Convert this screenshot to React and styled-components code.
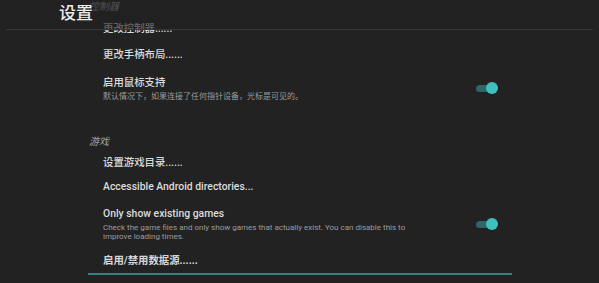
import styled, { createGlobalStyle } from 'styled-components';

const GlobalStyle = createGlobalStyle`
    html, body {
        margin: 0;
        padding: 0;
        background: #222222;
        overflow: hidden;
    }
    body {
        font-family: Roboto, "Noto Sans CJK SC", sans-serif;
        -webkit-font-smoothing: antialiased;
    }
`;

const sections = [
    {
        title: '控制器',
        items: [
            { title: '更改控制器......', height: 26 },
            { title: '更改手柄布局......', height: 26 },
            {
                title: '启用鼠标支持',
                summary: '默认情况下，如果连接了任何指针设备，光标是可见的。',
                toggle: true,
                height: 40,
            },
        ],
    },
    {
        title: '游戏',
        items: [
            { title: '设置游戏目录......', height: 24 },
            { title: 'Accessible Android directories...', height: 24 },
            {
                title: 'Only show existing games',
                summary: 'Check the game files and only show games that actually exist. You can disable this to improve loading times.',
                toggle: true,
                height: 50,
            },
            { title: '启用/禁用数据源......', height: 24, focused: true },
            { title: 'Rescan games...', height: 26 },
        ],
    },
];

function Switch() {
    return (
        <SwitchBox>
            <Track />
            <Thumb />
        </SwitchBox>
    );
}

function App() {
    return (
        <Screen>
            <GlobalStyle />
            <Header>
                <h1>设置</h1>
            </Header>

            <List>
                {sections.map((section) => (
                    <Section key={section.title}>
                        <Category>{section.title}</Category>
                        {section.items.map((item) => (
                            <div key={item.title}>
                                <Row $height={item.height}>
                                    <RowText>
                                        <RowTitle $strong={item.focused}>{item.title}</RowTitle>
                                        {item.summary && <Summary>{item.summary}</Summary>}
                                    </RowText>
                                    {item.toggle && <Switch />}
                                </Row>
                                {item.focused && <FocusLine />}
                            </div>
                        ))}
                    </Section>
                ))}
            </List>
        </Screen>
    );
}

export default App;

const Screen = styled.div`
    position: relative;
    width: 599px;
    height: 283px;
    overflow: hidden;
    background: #222222;
`;

// the toolbar floats over the scrolled list
const Header = styled.div`
    position: absolute;
    top: 0;
    left: 6px;
    right: 6px;
    height: 29px;
    z-index: 10;
    display: flex;
    align-items: center;
    background: rgba(34, 34, 34, 0.65);
    border-bottom: 1px solid #383838;

    > h1 {
        margin: 0 0 0 53px;
        font-size: 17px;
        font-weight: 500;
        color: #ececec;
        line-height: 1;
        transform: translateY(-1px);
    }
`;

const List = styled.div`
    margin-top: -27px;
    display: flex;
    flex-direction: column;
`;

const Section = styled.div`
    display: flex;
    flex-direction: column;
`;

const Category = styled.div`
    padding: 27px 0 2px 89px;
    height: 14px;
    line-height: 14px;
    font-size: 10px;
    font-style: italic;
    color: #a2a2a2;
`;

const Row = styled.div`
    height: ${(p) => p.$height}px;
    display: flex;
    align-items: center;
    padding: 0 101px 0 103px;
`;

const RowText = styled.div`
    flex: 1;
    max-width: 312px;
    display: flex;
    flex-direction: column;
`;

const RowTitle = styled.div`
    font-size: 10.4px;
    line-height: 14px;
    font-weight: ${(p) => (p.$strong ? 700 : 500)};
    color: ${(p) => (p.$strong ? '#d6d6d6' : '#dcdcdc')};
    white-space: nowrap;
`;

const Summary = styled.div`
    margin-top: 2px;
    font-size: 8px;
    line-height: 9px;
    color: #9c9c9c;
`;

const SwitchBox = styled.div`
    margin-left: auto;
    width: 22px;
    height: 12px;
    display: flex;
    align-items: center;
    position: relative;
`;

const Track = styled.div`
    width: 20px;
    height: 7px;
    border-radius: 4px;
    background: #2f6666;
`;

const Thumb = styled.div`
    position: absolute;
    right: 0;
    top: 0;
    width: 12px;
    height: 12px;
    border-radius: 50%;
    background: #3ec0c0;
`;

const FocusLine = styled.div`
    margin-left: 88px;
    width: 424px;
    height: 2px;
    background: #3a807a;
`;
